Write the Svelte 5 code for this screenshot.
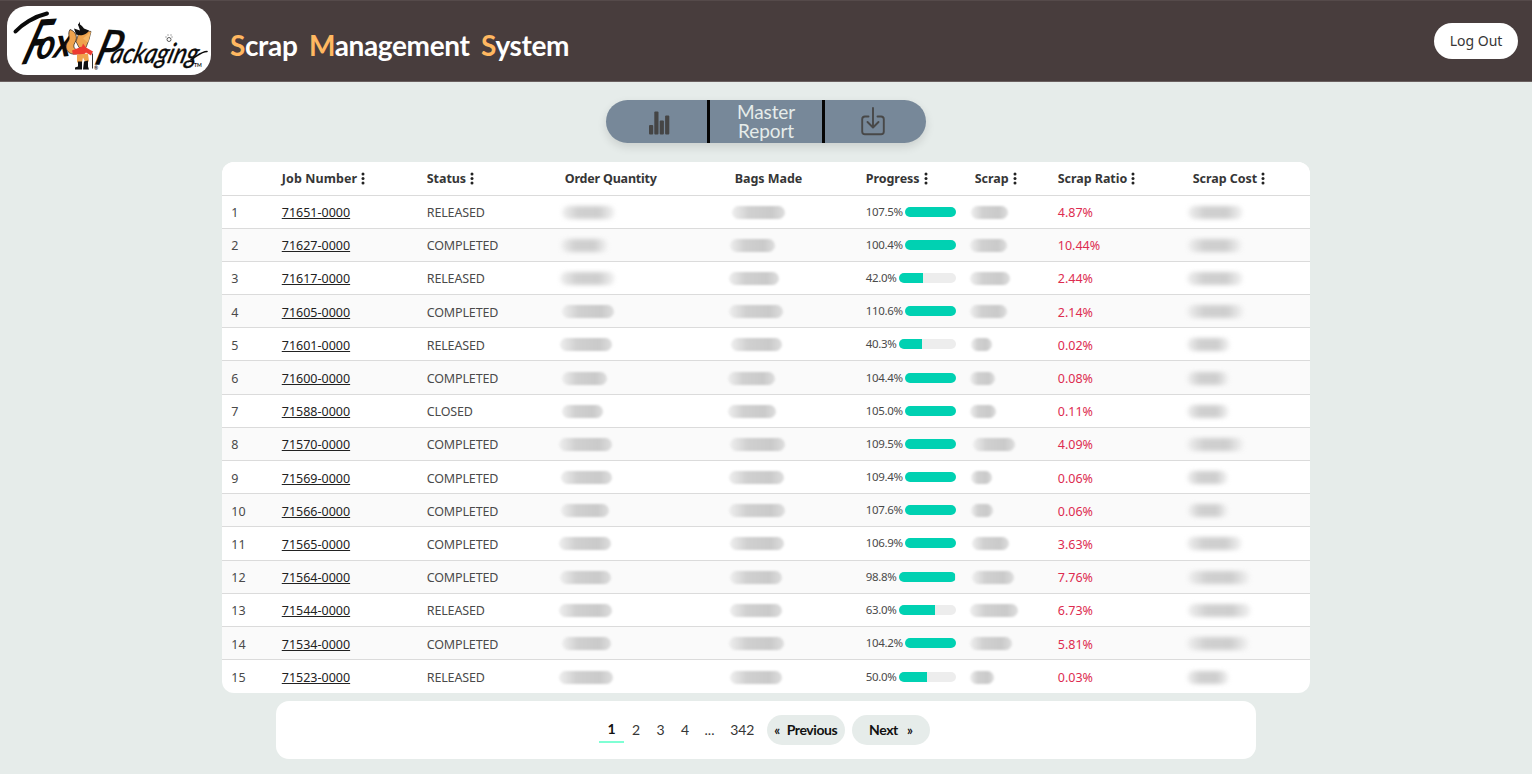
<script>
  // Each mask is [offset from the column edge, width].
  const rows = [
    ['71651', 'RELEASED', 107.5, '4.87', [-3, 53], [-3, 53], [-4, 37], [-5, 55]],
    ['71627', 'COMPLETED', 100.4, '10.44', [-4, 47], [-5, 45], [-5, 37], [-5, 54]],
    ['71617', 'RELEASED', 42.0, '2.44', [-5, 55], [-6, 50], [-5, 40], [-6, 56]],
    ['71605', 'COMPLETED', 110.6, '2.14', [-3, 52], [-6, 54], [-5, 37], [-6, 57]],
    ['71601', 'RELEASED', 40.3, '0.02', [-5, 52], [-4, 51], [-4, 21], [-6, 43]],
    ['71600', 'COMPLETED', 104.4, '0.08', [-3, 45], [-7, 47], [-5, 25], [-6, 42]],
    ['71588', 'CLOSED', 105.0, '0.11', [-3, 41], [-7, 48], [-5, 26], [-6, 42]],
    ['71570', 'COMPLETED', 109.5, '4.09', [-6, 53], [-5, 55], [-2, 42], [-6, 57]],
    ['71569', 'COMPLETED', 109.4, '0.06', [-4, 51], [-6, 55], [-4, 21], [-6, 41]],
    ['71566', 'COMPLETED', 107.6, '0.06', [-4, 48], [-6, 56], [-4, 22], [-5, 40]],
    ['71565', 'COMPLETED', 106.9, '3.63', [-6, 52], [-5, 54], [-3, 37], [-6, 55]],
    ['71564', 'COMPLETED', 98.8, '7.76', [-5, 51], [-5, 52], [-3, 42], [-5, 62]],
    ['71544', 'RELEASED', 63.0, '6.73', [-6, 53], [-5, 52], [-5, 48], [-5, 63]],
    ['71534', 'COMPLETED', 104.2, '5.81', [-3, 49], [-6, 55], [-5, 42], [-6, 62]],
    ['71523', 'RELEASED', 50.0, '0.03', [-6, 54], [-5, 52], [-5, 24], [-6, 42]]
  ];
  const heads = [
    ['', false], ['Job Number', true], ['Status', true], ['Order Quantity', false], ['Bags Made', false],
    ['Progress', true], ['Scrap', true], ['Scrap Ratio', true], ['Scrap Cost', true]
  ];
</script>

{#snippet mask(m, soft)}
  <div><span class="mask" class:soft style="margin-left:{m[0]}px;width:{m[1]}px"></span></div>
{/snippet}

<div class="page">
  <header>
    <div class="logo">
      <svg width="203" height="69" viewBox="7 6.5 203 69">
        <g class="script">
          <text transform="translate(20 65) rotate(-4) skewX(-24)" font-size="60" textLength="20" lengthAdjust="spacingAndGlyphs">F</text>
          <text transform="translate(35 60) rotate(-6) skewX(-16)" font-size="41" textLength="35" lengthAdjust="spacingAndGlyphs">ox</text>
          <text class="thin" transform="translate(93 65) rotate(2) skewX(-14)" font-size="49" textLength="24" lengthAdjust="spacingAndGlyphs">P</text>
          <text class="thin" transform="translate(109 63) skewX(-16)" font-size="28" textLength="87" lengthAdjust="spacingAndGlyphs">ackaging</text>
          <text class="mark" x="194" y="67" font-size="5">TM</text>
          <text class="mark" x="94" y="70" font-size="5">®</text>
        </g>
        <path d="M15.500 32C22 25 34 17 47 14" fill="none" stroke="#0b0b0b" stroke-width="4" stroke-linecap="round" />
        <path d="M191 60C197 57 201 52 207 52" fill="none" stroke="#0b0b0b" stroke-width="1.600" stroke-linecap="round" />
        <path d="M78 54C68 57 63 48 68 42C71 38 67 35 70 30C76 32 78 38 75 43C72 48 75 51 80 50Z" fill="#efa34d" stroke="#1a1411" stroke-width=".7" />
        <path d="M78 36C79 31 86 31 91 32L89 40L86 48L79 48L76 42Z" fill="#efa34d" stroke="#1a1411" stroke-width=".6" />
        <path d="M83 39L91 32L88 43Z" fill="#f5b767" />
        <path d="M74 29L80 31L78 25C78 23 82 26 84 29L89 31C87 35 81 37 76 35Z M78 26L80 22L80 27Z" fill="#111" />
        <path d="M72 51L82 47L83 44L86 48L93 52L91 56L86 53L83 56L77 55L73 55Z" fill="#ed3b31" />
        <path d="M77 55L88 54L89 62L85 62L83 58L82 63L77 63Z" fill="#efa34d" />
        <path d="M78 62L82 62L82 70L75 70L75 68L78 67Z M84 62L88 61L88 67L89 70L83 70Z" fill="#111" />
        <path d="M92.500 54V69" stroke="#333" stroke-width="1" />
        <g fill="none" stroke="#333" stroke-width=".8"><circle cx="169" cy="40" r="2" /><path d="M166 38V37M168 36V35M171 36V35M172 38V37" /></g>
      </svg>
    </div>
    <h1><b>S</b>crap <b>M</b>anagement <b>S</b>ystem</h1>
    <button class="logout">Log Out</button>
  </header>

  <nav>
    <button>
      <svg class="bars" width="21" height="24" viewBox="0 0 21 24" fill="#454545">
        <rect y="14" width="4.200" height="9.500" rx="1" /><rect x="5.300" y=".5" width="4.200" height="23" rx="1" />
        <rect x="10.700" y="9.500" width="4.200" height="14" rx="1" /><rect x="16.100" y="4.500" width="4.200" height="19" rx="1" />
      </svg>
    </button>
    <button class="master">Master<br />Report</button>
    <button>
      <svg class="down" width="24" height="29" viewBox="0 0 24 29" fill="none" stroke="#484848" stroke-width="1.900" stroke-linecap="round" stroke-linejoin="round">
        <path d="M7.500 9.500H4A2.800 2.800 0 0 0 1.200 12.300V24.500A2.800 2.800 0 0 0 4 27.300H20A2.800 2.800 0 0 0 22.800 24.500V12.300A2.800 2.800 0 0 0 20 9.500H16.500M12 1V20M6.500 15L12 20.500L17.500 15" />
      </svg>
    </button>
  </nav>

  <section class="table">
    <div class="row head">
      {#each heads as [label, menu]}
        <div>
          {label}{#if menu}<svg width="4" height="13" viewBox="0 0 4 13" fill="#222"><circle cx="2" cy="2" r="1.500" /><circle cx="2" cy="6.500" r="1.500" /><circle cx="2" cy="11" r="1.500" /></svg>{/if}
        </div>
      {/each}
    </div>
    {#each rows as r, i}
      <div class="row">
        <div class="num">{i + 1}</div>
        <div class="job"><a href="#{r[0]}">{r[0]}-0000</a></div>
        <div class="status">{r[1]}</div>
        {@render mask(r[4], i < 3)}
        {@render mask(r[5], false)}
        <div class="progress">
          <span>{r[2].toFixed(1)}%</span>
          <div class="track"><div class="fill" style="width:{Math.min(r[2], 100)}%"></div></div>
        </div>
        {@render mask(r[6], false)}
        <div class="ratio">{r[3]}%</div>
        {@render mask(r[7], true)}
      </div>
    {/each}
  </section>

  <footer>
    <span class="pg current">1</span>
    <span class="pg">2</span>
    <span class="pg">3</span>
    <span class="pg">4</span>
    <span class="pg">...</span>
    <span class="pg last">342</span>
    <button class="prev"><i>«</i>Previous</button>
    <button class="next">Next<i>»</i></button>
  </footer>
</div>

<style>
  :global(body) { background: #e6ecea; }
  * { box-sizing: border-box; }
  button { border: 0; padding: 0; font: inherit; }
  .page { height: 774px; overflow: hidden; display: flex; flex-direction: column; align-items: center; font-family: "Noto Sans", "Open Sans", sans-serif; color: #4a4a4a; }
  header { width: 100%; height: 82px; flex: none; display: flex; align-items: center; padding: 0 14px 0 7px; background: #483d3d; border-top: 1px solid #554a4a; border-bottom: 1px solid #6a6060; }
  .logo { width: 204px; height: 69px; margin-top: -1px; border-radius: 20px; background: #fff; }
  .logo svg { display: block; overflow: visible; }
  .script { font-family: Lato, sans-serif; font-style: italic; font-weight: 700; fill: #0b0b0b; }
  .thin { font-weight: 500; stroke: #0b0b0b; stroke-width: .3px; }
  .mark { font-style: normal; }
  h1 { margin: 8px 0 0 19px; font: 700 28px/32px Lato, sans-serif; color: #fff; letter-spacing: -.35px; word-spacing: 5px; white-space: nowrap; }
  h1 b { color: #ffb861; font-weight: 700; }
  .logout { margin-left: auto; width: 84px; height: 36px; border-radius: 18px; background: #fff; color: #363636; font-size: 14px; padding-bottom: 1px; }
  nav { display: grid; grid-template-columns: 101px 118px 101px; width: 320px; height: 43px; flex: none; margin-top: 17.500px; border-radius: 22px; overflow: hidden; background: #778899; box-shadow: 0 4px 10px rgba(0, 0, 0, .12); }
  nav button { display: flex; align-items: center; justify-content: center; background: none; }
  nav .master { border: solid #050505; border-width: 0 3px; font: 19px/18.500px Lato, sans-serif; letter-spacing: -.1px; color: #e6ecea; padding-top: 1px; }
  .bars { margin: 4px 0 0 5px; }
  .down { margin: 1px 6px 0 0; }
  .table { width: 1088.500px; flex: none; margin-top: 19.500px; border-radius: 12px; overflow: hidden; background: #fff; }
  .row { display: grid; grid-template-columns: 50.500px 145px 138px 170px 131px 109px 83px 135px 1fr; align-items: center; height: 33.200px; padding-left: 9.500px; border-bottom: 1px solid #dbdbdb; font-size: 12.500px; line-height: 18px; white-space: nowrap; }
  .row:nth-child(odd) { background: #fafafa; }
  .row:last-child { border-bottom: 0; }
  .row.head { height: 33.500px; background: #fff; border-bottom: 1.500px solid #dbdbdb; font-weight: 700; font-size: 12.500px; letter-spacing: -.05px; color: #363636; }
  .head svg { margin-left: 4px; vertical-align: -2px; }
  .row > div { padding-top: 1px; }
  .row > .num, .row > .job, .row > .status, .row > .ratio { padding-top: 3px; }
  .row > .status { letter-spacing: -.15px; }
  .row.head > div { padding-top: 2px; }
  .row.head > :nth-child(2) { letter-spacing: .1px; }
  .row.head > :nth-child(4) { letter-spacing: -.2px; }
  a { color: #222; text-decoration: underline; text-underline-offset: 1px; }
  .ratio { color: #dd2c50; }
  .mask { display: block; height: 13px; border-radius: 7px; background: linear-gradient(90deg, #eee, #d0d0d0 32%, #cacaca 75%, #dedede); filter: blur(1px); }
  .mask.soft { background: linear-gradient(90deg, #f0f0f0, #d0d0d0 30%, #cecece 70%, #f4f4f4); filter: blur(2.200px); }
  .row > .progress { display: flex; align-items: center; gap: 2.500px; width: 90px; padding: 0; }
  .progress span { font-size: 11.500px; line-height: 14px; letter-spacing: -.35px; }
  .track { flex: 1; height: 10px; border-radius: 5px; background: #ededed; overflow: hidden; }
  .fill { height: 100%; background: #00d1b2; }
  footer { width: 979.500px; height: 57.500px; flex: none; margin-top: 8px; padding: 0 0 1px 323px; display: flex; align-items: center; border-radius: 13px; background: #fff; font: 14px Lato, sans-serif; color: #363636; }
  .pg { width: 24.500px; height: 27px; line-height: 27px; text-align: center; }
  .current { font-weight: 700; color: #111; border-bottom: 2px solid #7fffd4; line-height: 26px; }
  .last { width: 41px; letter-spacing: -.2px; }
  footer button { height: 30px; border-radius: 15px; background: #e6ecea; color: #111; font-weight: 700; letter-spacing: -.4px; }
  footer i { font-style: normal; font-size: 13px; }
  .prev { width: 78px; margin-left: 4px; }
  .prev i { margin-right: 7px; }
  .next { width: 78px; margin-left: 7px; }
  .next i { margin-left: 9px; }
</style>
